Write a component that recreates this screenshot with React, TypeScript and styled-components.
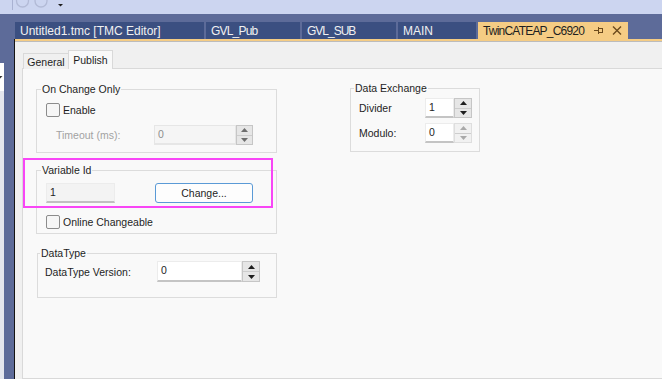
import React from "react";
import styled, { createGlobalStyle } from "styled-components";

const GlobalStyle = createGlobalStyle`
  html, body {
    margin: 0;
    padding: 0;
  }
  body {
    background: #f0f0f0;
    font-family: "Liberation Sans", Arial, sans-serif;
    overflow: hidden;
  }
  * {
    box-sizing: border-box;
  }
`;

const Window = styled.div`
  width: 662px;
  height: 379px;
  display: flex;
  flex-direction: column;
  overflow: hidden;
`;

const Toolbar = styled.div`
  height: 14px;
  flex: none;
  background: #ccd5f0;
  display: flex;
`;

const TabBand = styled.div`
  height: 25px;
  flex: none;
  background: #5d6b99;
  display: flex;
  align-items: flex-end;
  gap: 2px;
  padding-left: 15px;
`;

const DocTab = styled.div<{ $width: number; $active?: boolean }>`
  width: ${(p) => p.$width}px;
  height: 17px;
  flex: none;
  display: flex;
  align-items: center;
  padding-left: 5px;
  background: ${(p) => (p.$active ? "#f5cc84" : "#3b4f81")};
  color: ${(p) => (p.$active ? "#1e1e1e" : "#f1f1f1")};
  font-size: 12px;
  white-space: nowrap;
  overflow: hidden;
`;

const TabTitle = styled.span<{ $spacing: number }>`
  letter-spacing: ${(p) => p.$spacing}px;
`;

const TabIcons = styled.div`
  margin-left: auto;
  display: flex;
  align-items: center;
  gap: 9px;
  padding-right: 6px;
`;

const Workspace = styled.div`
  flex: 1;
  display: grid;
  grid-template-columns: 15px 1fr;
  min-height: 0;
`;

const SidePanel = styled.div`
  background: linear-gradient(
    to right,
    #e4e6ed 0 4px,
    #5d6b99 4px 14px,
    #141414 14px 15px
  );
  display: flex;
  flex-direction: column;
`;

const SideBlock = styled.div<{ $height: number; $color: string }>`
  width: 4px;
  height: ${(p) => p.$height}px;
  flex: none;
  background: ${(p) => p.$color};
  display: flex;
  align-items: center;
  overflow: hidden;
`;

const Document = styled.div`
  display: flex;
  flex-direction: column;
  min-width: 0;
`;

const AccentLine = styled.div`
  height: 2px;
  flex: none;
  background: #f5cc84;
`;

const Rule = styled.div`
  height: 1px;
  flex: none;
  background: #bcbcbc;
`;

const Body = styled.div`
  flex: 1;
  display: flex;
  flex-direction: column;
  background: #f0f0f0;
  padding: 8px 0 0 7px;
`;

const TabHeaders = styled.div`
  display: flex;
  align-items: flex-end;
  height: 19px;
  padding-left: 1px;
  position: relative;
  z-index: 1;
`;

const PageTab = styled.div<{ $selected?: boolean; $width: number }>`
  width: ${(p) => p.$width}px;
  height: ${(p) => (p.$selected ? 19 : 16)}px;
  margin-left: ${(p) => (p.$selected ? -1 : 0)}px;
  display: flex;
  align-items: center;
  justify-content: center;
  font-size: 10.5px;
  color: #1e1e1e;
  background: ${(p) => (p.$selected ? "#f9f9f9" : "#f0f0f0")};
  border: 1px solid #d9d9d9;
  border-bottom: none;
`;

const TabPage = styled.div`
  flex: 1;
  margin-top: -1px;
  margin-right: -2px;
  position: relative;
  background: #f9f9f9;
  border: 1px solid #d9d9d9;
  display: flex;
  align-items: flex-start;
  gap: 73px;
  padding: 13px 0 0 13px;
`;

const Column = styled.div<{ $width: number; $shift?: number }>`
  width: ${(p) => p.$width}px;
  margin-top: ${(p) => p.$shift ?? 0}px;
  display: flex;
  flex-direction: column;
`;

const Group = styled.fieldset<{ $pad: string; $gap?: number; $space?: number; $inset?: number }>`
  margin: ${(p) => p.$space ?? 0}px 0 0 ${(p) => p.$inset ?? 0}px;
  border: 1px solid #dcdcdc;
  padding: ${(p) => p.$pad};
  min-width: 0;
  display: flex;
  flex-direction: column;
  gap: ${(p) => p.$gap ?? 0}px;
`;

const Legend = styled.legend`
  font-size: 10.5px;
  line-height: 14px;
  padding: 0 1px;
  margin-left: -5px;
  color: #1e1e1e;
`;

const Row = styled.div<{ $indent?: number; $height?: number }>`
  display: flex;
  align-items: center;
  height: ${(p) => p.$height ?? 20}px;
  padding-left: ${(p) => p.$indent ?? 0}px;
`;

const Label = styled.span<{ $width?: number; $disabled?: boolean }>`
  width: ${(p) => (p.$width ? `${p.$width}px` : "auto")};
  flex: none;
  font-size: 10.5px;
  color: ${(p) => (p.$disabled ? "#a2a2a2" : "#1e1e1e")};
  white-space: nowrap;
`;

const Checkbox = styled.span`
  width: 14px;
  height: 14px;
  flex: none;
  border: 1px solid #8c8c8c;
  border-radius: 2px;
  background: #f6f6f6;
  margin-right: 3px;
`;

type Tone = "normal" | "disabled" | "readonly";

const fieldBg: Record<Tone, string> = {
  normal: "#ffffff",
  disabled: "#f5f5f5",
  readonly: "#f3f3f3",
};

const fieldLine: Record<Tone, string> = {
  normal: "#c4c4c4",
  disabled: "#e6e6e6",
  readonly: "#c0c0c0",
};

const Field = styled.div<{ $width: number; $height?: number; $tone: Tone }>`
  width: ${(p) => p.$width}px;
  height: ${(p) => p.$height ?? 20}px;
  flex: none;
  background: ${(p) => fieldBg[p.$tone]};
  border: 1px solid ${(p) => (p.$tone === "disabled" ? "#e6e6e6" : "#ececec")};
  border-bottom: 2px solid ${(p) => fieldLine[p.$tone]};
  padding: 2px 0 0 3px;
  font-size: 10.5px;
  line-height: 12px;
  color: ${(p) => (p.$tone === "disabled" ? "#8e8e8e" : "#1e1e1e")};
`;

type SpinTone = "dark" | "gray" | "muted";

const arrowColor: Record<SpinTone, string> = {
  dark: "#1e1e1e",
  gray: "#6e6e6e",
  muted: "#a9a9a9",
};

const Spinner = styled.div<{ $width: number; $height?: number; $tone: SpinTone }>`
  width: ${(p) => p.$width}px;
  height: ${(p) => p.$height ?? 20}px;
  flex: none;
  display: flex;
  flex-direction: column;
  border: 1px solid ${(p) => (p.$tone === "muted" ? "#dedede" : "#c6c6c6")};
  background: ${(p) => (p.$tone === "muted" ? "#f1f1f1" : "#e6e6e6")};
  color: ${(p) => arrowColor[p.$tone]};
`;

const SpinHalf = styled.div<{ $top?: boolean }>`
  flex: 1;
  display: flex;
  align-items: center;
  justify-content: center;
  border-bottom: ${(p) => (p.$top ? "1px solid #cdcdcd" : "none")};
`;

const ChangeButton = styled.button`
  width: 98px;
  height: 20px;
  margin-left: 40px;
  border: 1px solid #5a9ad6;
  border-radius: 3px;
  background: #fdfdfd;
  font-family: inherit;
  font-size: 10.5px;
  color: #1e1e1e;
  padding: 0;
`;

const Highlight = styled.div`
  position: absolute;
  left: 0;
  top: 89px;
  width: 250px;
  height: 50px;
  border: 2px solid #f846f6;
  pointer-events: none;
`;

const Arrow = ({ up }: { up?: boolean }) => (
  <svg width="7" height="4" viewBox="0 0 7 4">
    <polygon points={up ? "0,4 7,4 3.5,0" : "0,0 7,0 3.5,4"} fill="currentColor" />
  </svg>
);

const NumericUpDown = ({
  value,
  width,
  spinWidth,
  height,
  tone,
  spin,
}: {
  value: string;
  width: number;
  spinWidth: number;
  height?: number;
  tone: Tone;
  spin: SpinTone;
}) => (
  <>
    <Field $width={width} $height={height} $tone={tone}>
      {value}
    </Field>
    <Spinner $width={spinWidth} $height={height} $tone={spin}>
      <SpinHalf $top>
        <Arrow up />
      </SpinHalf>
      <SpinHalf>
        <Arrow />
      </SpinHalf>
    </Spinner>
  </>
);

const ToolbarArt = () => (
  <svg width="70" height="14" viewBox="0 0 70 14">
    <line x1="12.5" y1="0" x2="12.5" y2="10" stroke="#a9b2d2" strokeWidth="1" />
    <circle cx="22.5" cy="1" r="6" fill="none" stroke="#b2bad6" strokeWidth="1.3" />
    <circle cx="41" cy="1" r="6" fill="none" stroke="#b2bad6" strokeWidth="1.3" />
    <polygon points="58,4 63,4 60.5,6.5" fill="#1e1e1e" />
  </svg>
);

const PinIcon = () => (
  <svg width="9" height="7" viewBox="0 0 9 7">
    <line x1="0" y1="3.5" x2="4" y2="3.5" stroke="#6b4a1c" strokeWidth="1" />
    <line x1="4.5" y1="0" x2="4.5" y2="7" stroke="#6b4a1c" strokeWidth="1" />
    <rect x="4.5" y="1.5" width="4" height="4" fill="none" stroke="#6b4a1c" strokeWidth="1" />
  </svg>
);

const CloseIcon = () => (
  <svg width="10" height="9" viewBox="0 0 10 9">
    <path d="M1 0.5 L9 8.5 M9 0.5 L1 8.5" stroke="#6b4a1c" strokeWidth="1.4" />
  </svg>
);

const tabs = [
  { title: "Untitled1.tmc [TMC Editor]", width: 189, spacing: 0 },
  { title: "GVL_Pub", width: 94, spacing: -0.8 },
  { title: "GVL_SUB", width: 94, spacing: -1 },
  { title: "MAIN", width: 78, spacing: 0 },
];

export default function App() {
  return (
    <Window>
      <GlobalStyle />
      <Toolbar>
        <ToolbarArt />
      </Toolbar>
      <TabBand>
        {tabs.map((tab) => (
          <DocTab key={tab.title} $width={tab.width}>
            <TabTitle $spacing={tab.spacing}>{tab.title}</TabTitle>
          </DocTab>
        ))}
        <DocTab $width={150} $active>
          <TabTitle $spacing={-0.8}>TwinCATEAP_C6920</TabTitle>
          <TabIcons>
            <PinIcon />
            <CloseIcon />
          </TabIcons>
        </DocTab>
      </TabBand>
      <Workspace>
        <SidePanel>
          <SideBlock $height={24} $color="#5d6b99" />
          <SideBlock $height={28} $color="#ffffff">
            <svg width="4" height="4" viewBox="0 0 4 4">
              <polygon points="-2,1 2.5,1 0.2,3.5" fill="#333" />
            </svg>
          </SideBlock>
        </SidePanel>
        <Document>
          <AccentLine />
          <Rule />
          <Body>
            <TabHeaders>
              <PageTab $width={46}>General</PageTab>
              <PageTab $width={45} $selected>
                Publish
              </PageTab>
            </TabHeaders>
            <TabPage>
              <Column $width={241}>
                <Group $pad="7px 0 7px 9px" $gap={8}>
                  <Legend>On Change Only</Legend>
                  <Row $height={14}>
                    <Checkbox />
                    <Label>Enable</Label>
                  </Row>
                  <Row $indent={10}>
                    <Label $width={98} $disabled>
                      Timeout (ms):
                    </Label>
                    <NumericUpDown value="0" width={82} spinWidth={17} tone="disabled" spin="gray" />
                  </Row>
                </Group>
                <Group $pad="6px 0 4px 9px" $gap={12} $space={10}>
                  <Legend>Variable Id</Legend>
                  <Row>
                    <Field $width={69} $tone="readonly">
                      1
                    </Field>
                    <ChangeButton>Change...</ChangeButton>
                  </Row>
                  <Row $height={14}>
                    <Checkbox />
                    <Label>Online Changeable</Label>
                  </Row>
                </Group>
                <Group $pad="1px 0 15px 7px" $space={12} $inset={1}>
                  <Legend>DataType</Legend>
                  <Row $height={21}>
                    <Label $width={112}>DataType Version:</Label>
                    <NumericUpDown value="0" width={85} spinWidth={18} height={21} tone="normal" spin="dark" />
                  </Row>
                </Group>
              </Column>
              <Column $width={130} $shift={-1}>
                <Group $pad="3px 0 8px 8px" $gap={5}>
                  <Legend>Data Exchange</Legend>
                  <Row>
                    <Label $width={66}>Divider</Label>
                    <NumericUpDown value="1" width={29} spinWidth={18} tone="normal" spin="dark" />
                  </Row>
                  <Row>
                    <Label $width={66}>Modulo:</Label>
                    <NumericUpDown value="0" width={29} spinWidth={18} tone="normal" spin="muted" />
                  </Row>
                </Group>
              </Column>
              <Highlight />
            </TabPage>
          </Body>
        </Document>
      </Workspace>
    </Window>
  );
}
